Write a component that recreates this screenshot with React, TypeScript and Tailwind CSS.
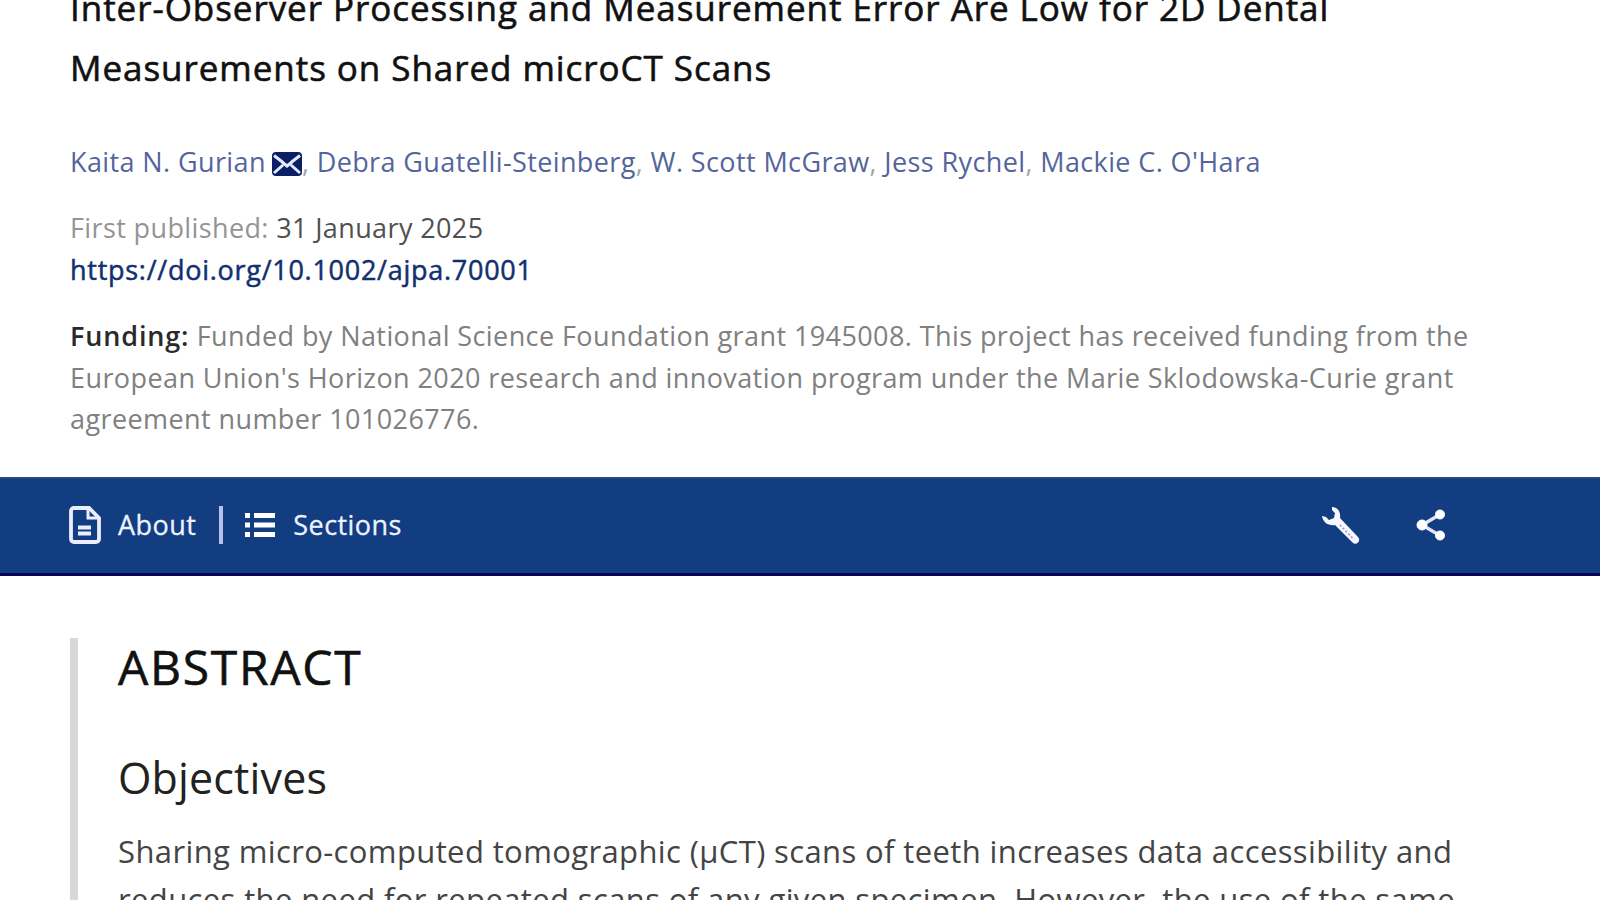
const authors = ["Debra Guatelli-Steinberg", "W. Scott McGraw", "Jess Rychel", "Mackie C. O'Hara"];

function MailIcon() {
  return (
    <svg viewBox="0 0 32 24" className="mx-[6px] h-6 w-8 -translate-x-px translate-y-[2px]">
      <rect x="1" y="0" width="30" height="24" rx="4" fill="#0b1f66" />
      <path d="M3 3.500l9 7M29 3.500l-9 7M3 21l9-8M29 21l-9-8M11 10l5 4 5-4" fill="none" stroke="#e6ecff" strokeWidth="3" />
    </svg>
  );
}

function DocumentIcon() {
  return (
    <svg viewBox="0 0 32 38" className="h-[38px] w-8" fill="none" stroke="#eceeff" strokeWidth="3.8">
      <path d="M5 2h15l10 10v21a3 3 0 0 1-3 3H5a3 3 0 0 1-3-3V5a3 3 0 0 1 3-3z" />
      <path d="M19 2v10h11" strokeWidth="3" />
      <path d="M9 21.500h13M9 27.500h13" />
    </svg>
  );
}

function ListIcon() {
  return (
    <svg viewBox="0 0 30 26" className="h-[26px] w-[30px]" fill="#fff">
      <path d="M0 1h5v5H0zM0 10.500h5v5H0zM0 20h5v5H0zM9 1h21v5H9zM9 10.500h21v5H9zM9 20h21v5H9z" />
    </svg>
  );
}

function WrenchIcon() {
  return (
    <svg viewBox="0 0 40 40" className="size-10">
      <path
        d="M11 1c5 0 9 4 8 11l18 19a3.800 3.800 0 0 1 0 5.500a3.800 3.800 0 0 1-5.500 0L14 19C8 20 2 17 1 10l4 1 3 3 5-2 1-5-3-3z"
        fill="#f7f7ff"
      />
      <path d="M19 19l14 14.500" stroke="#8f9bc8" strokeWidth="1.600" strokeDasharray="2 2" />
    </svg>
  );
}

function ShareIcon() {
  return (
    <svg viewBox="0 0 30 32" className="h-8 w-[30px]" fill="#fff" stroke="#fff">
      <path d="M24 5.500L6 16l18 10.500" fill="none" stroke="#e2e5fa" strokeWidth="3.400" />
      <circle cx="24" cy="5.500" r="4.500" />
      <circle cx="6" cy="16" r="5" />
      <circle cx="24" cy="26.500" r="4.500" />
    </svg>
  );
}

export default function App() {
  return (
    <main className="h-[900px] w-[1600px] overflow-hidden bg-white font-['Open_Sans',sans-serif] whitespace-nowrap">
      <header className="flow-root h-[477px] pl-[70px]">
        <h1 className="-mt-[22px] text-[35px] leading-[59.500px] tracking-[0.95px] text-[#111] [-webkit-text-stroke:0.6px_#111]">
          <span className="block">Inter-Observer Processing and Measurement Error Are Low for 2D Dental</span>
          <span className="block">Measurements on Shared microCT Scans</span>
        </h1>
        <div className="mt-[44px] flex h-[42px] items-center text-[27px] tracking-[0.39px] text-[#55659b]">
          <span>Kaita N. Gurian</span>
          <MailIcon />
          <span className="-ml-[8px]">
            {authors.map((name) => (
              <span key={name}>
                <span className="text-[#a0a4b0]">, </span>
                {name}
              </span>
            ))}
          </span>
        </div>
        <div className="mt-6 text-[27px] leading-[42px] tracking-[0.38px]">
          <p className="text-[#949494]">
            First published: <span className="text-[#505050]">31 January 2025</span>
          </p>
          <p className="tracking-[0.73px] text-[#12306f] [-webkit-text-stroke:0.5px_#12306f]">
            https://doi.org/10.1002/ajpa.70001
          </p>
        </div>
        <div className="mt-6 text-[27px] leading-[41.700px] tracking-[0.41px] text-[#808080]">
          <p>
            <strong className="font-semibold tracking-[0.85px] text-[#2a2a2a]">Funding:</strong> Funded by National Science Foundation grant 1945008. This project has received funding from the
          </p>
          <p>European Union's Horizon 2020 research and innovation program under the Marie Sklodowska-Curie grant</p>
          <p>agreement number 101026776.</p>
        </div>
      </header>
      <nav className="flex h-[99px] items-center border-t-2 border-b-[3px] border-t-[#2a4a80] border-b-[#06085a] bg-[#123d80] pr-[154px] pb-[2px] pl-[69px] text-[27px] tracking-[0.45px] text-[#eef1ff] [-webkit-text-stroke:0.3px_#eef1ff]">
        <DocumentIcon />
        <span className="ml-[17px]">About</span>
        <span className="ml-[23px] h-[38px] w-1 bg-[#b9bfe6]" />
        <span className="ml-[22px] flex">
          <ListIcon />
        </span>
        <span className="ml-[18px]">Sections</span>
        <span className="ml-auto flex items-center gap-[55px]">
          <span className="flex pt-[2px]">
            <WrenchIcon />
          </span>
          <ShareIcon />
        </span>
      </nav>
      <section className="mt-[62px] ml-[70px] h-[300px] border-l-[8px] border-[#d8d8d8] pl-[40px]">
        <h2 className="text-[48px] leading-[58px] tracking-[1.700px] text-[#111] [-webkit-text-stroke:0.6px_#111]">ABSTRACT</h2>
        <h3 className="mt-[52px] text-[43px] leading-[60px] tracking-[0.15px] text-[#222]">Objectives</h3>
        <div className="mt-[19px] text-[31px] leading-[48px] tracking-[0.38px] text-[#444]">
          <p>Sharing micro-computed tomographic (µCT) scans of teeth increases data accessibility and</p>
          <p>reduces the need for repeated scans of any given specimen. However, the use of the same</p>
        </div>
      </section>
    </main>
  );
}
